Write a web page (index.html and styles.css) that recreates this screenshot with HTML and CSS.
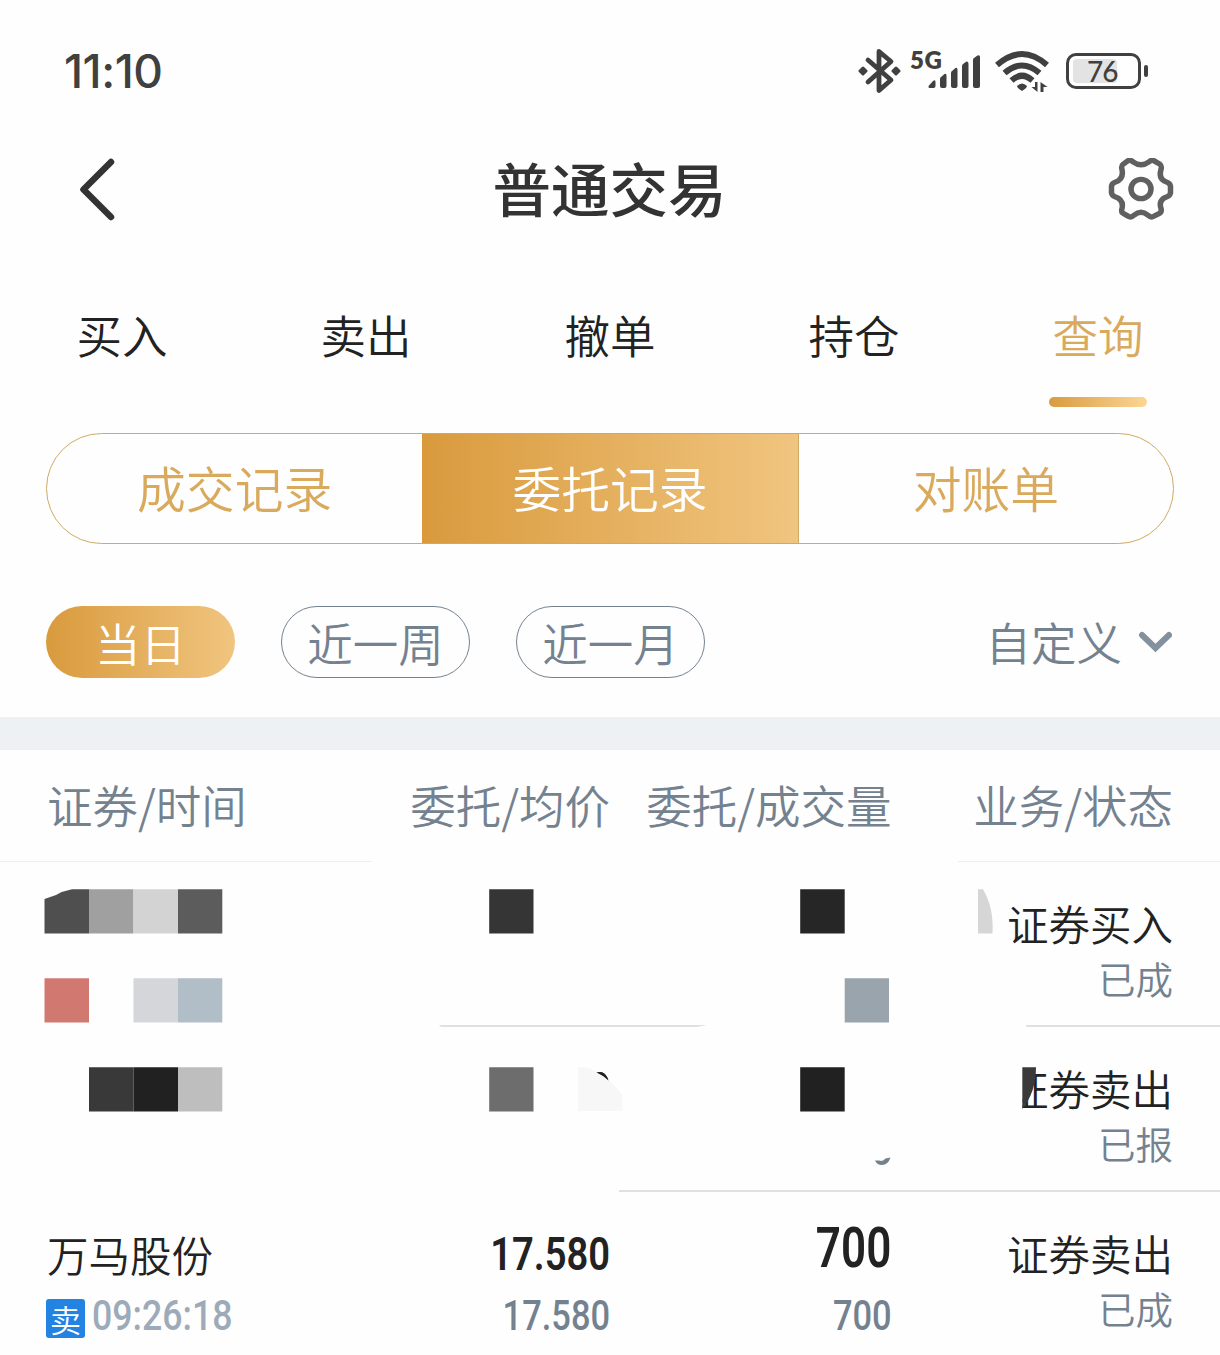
FILE: index.html
```html
<!DOCTYPE html>
<html lang="zh-CN">

<head>
    <meta charset="UTF-8">
    <meta name="viewport" content="width=device-width, initial-scale=1.0">
    <title>普通交易</title>
    <link rel="stylesheet" href="styles.css">
</head>

<body>
    <div class="status-bar">
        <span class="clock">11:10</span>
        <div class="status-icons">
            <svg class="bluetooth" width="44" height="48" viewBox="0 0 44 48">
                <path d="M10 13 L33 33 L21 43.500 V4.500 L33 14.500 L10 35" fill="none" stroke="#404040" stroke-width="4.8" stroke-linejoin="round" stroke-linecap="round" />
                <path d="M5 21 L8 24 L5 27 L2 24 Z M38 21 L41 24 L38 27 L35 24 Z" fill="#404040" stroke="#404040" stroke-width="3" stroke-linejoin="round" />
            </svg>
            <div class="signal">
                <span class="network">5G</span>
                <svg width="54" height="36" viewBox="0 0 54 36" fill="#404040">
                    <path d="M1 32.500 L5 28 Q7.500 26 7.500 29 V33 Q7.500 35 5.500 35 H2 Q-0.500 35 1 32.500Z" />
                    <path d="M12 26 Q12 24.500 13 24 L16.500 21 Q18.500 20 18.500 23 V33 Q18.500 35 16.500 35 H14 Q12 35 12 33Z" />
                    <path d="M23 20 Q23 18.500 24 18 L27.500 15 Q29.500 14 29.500 17 V33 Q29.500 35 27.500 35 H25 Q23 35 23 33Z" />
                    <path d="M34 13 Q34 12 35 11 L38.500 8.500 Q40.500 8 40.500 11 V33 Q40.500 35 38.500 35 H36 Q34 35 34 33Z" />
                    <path d="M45 7 Q45 5.500 46 5 L49.500 2.500 Q52 1.500 52 4 V33 Q52 35 50 35 H47 Q45 35 45 33Z" />
                </svg>
            </div>
            <svg class="wifi" width="56" height="44" viewBox="0 0 56 44">
                <g fill="none" stroke="#404040" stroke-width="6">
                    <path d="M3 16 Q28 -6 53 16" />
                    <path d="M10.500 24 Q28 9 45.500 24" />
                    <path d="M17.500 31.500 Q28 22 38.500 31.500" />
                </g>
                <path d="M23 37 Q28 32 33 37 Q33 39 28 42 Q23 39 23 37Z" fill="#404040" />
                <path d="M43.500 33 V43 L37.500 38 H41 V33Z M46.500 43 V33 L53.500 38 H49.500 V43Z" fill="#404040" />
            </svg>
            <div class="battery"><span class="level">76</span></div>
        </div>
    </div>

    <header class="header">
        <svg class="back" width="40" height="66" viewBox="0 0 40 66">
            <path d="M34 6 L6.500 33.500 L34 61" fill="none" stroke="#333" stroke-width="6.5" stroke-linecap="round" stroke-linejoin="round" />
        </svg>
        <h1>普通交易</h1>
        <svg class="settings" width="66" height="62" viewBox="0 0 66 64" preserveAspectRatio="none" fill="none" stroke="#606060" stroke-width="5.500" stroke-linejoin="round">
            <path d="M19 3.500 Q22 1 25 4 Q33 10 41 4 Q44 1 47 3.500 L52 6.500 Q54 8 53 12 Q50 22 59 25 Q62 26 62.500 29 V36 Q62 39 59 40 Q50 43 53 52 Q54 56 51 57.500 L46 60 Q43 62 40 59 Q33 53 26 59 Q23 62 20 60 L15 57 Q13 56 14 52 Q16 43 7 40 Q4 39 3.500 36 V29 Q4 26 7 25 Q16 22 14 12 Q13 8 15 6.500 Z" />
            <circle cx="33" cy="32" r="10" />
        </svg>
    </header>

    <nav class="tabs">
        <a class="tab">买入</a>
        <a class="tab">卖出</a>
        <a class="tab">撤单</a>
        <a class="tab">持仓</a>
        <a class="tab active">查询</a>
    </nav>

    <div class="segments">
        <div class="segment">成交记录</div>
        <div class="segment active">委托记录</div>
        <div class="segment">对账单</div>
    </div>

    <div class="filters">
        <div class="pill active">当日</div>
        <div class="pill">近一周</div>
        <div class="pill">近一月</div>
        <div class="custom">
            <span>自定义</span>
            <svg width="34" height="22" viewBox="0 0 34 22">
                <path d="M4 4 L17.500 17 L31 4" fill="none" stroke="#83909d" stroke-width="6" stroke-linecap="round" stroke-linejoin="miter" />
            </svg>
        </div>
    </div>

    <main class="orders">
        <div class="row head">
            <div>证券/时间</div>
            <div>委托/均价</div>
            <div>委托/成交量</div>
            <div>业务/状态</div>
        </div>
        <div class="list">
            <div class="row">
                <div class="cell"></div>
                <div class="cell"></div>
                <div class="cell"></div>
                <div class="cell status">
                    <span class="main">证券买入</span>
                    <span class="sub">已成</span>
                </div>
            </div>
            <div class="row">
                <div class="cell"></div>
                <div class="cell"></div>
                <div class="cell"></div>
                <div class="cell status">
                    <span class="main">证券卖出</span>
                    <span class="sub">已报</span>
                </div>
            </div>
            <div class="row">
                <div class="cell stock">
                    <span class="main">万马股份</span>
                    <span class="sub"><i class="badge">卖</i><b class="time">09:26:18</b></span>
                </div>
                <div class="cell price">
                    <span class="main">17.580</span>
                    <span class="sub">17.580</span>
                </div>
                <div class="cell amount">
                    <span class="main">700</span>
                    <span class="sub">700</span>
                </div>
                <div class="cell status">
                    <span class="main">证券卖出</span>
                    <span class="sub">已成</span>
                </div>
            </div>

            <!-- mosaic over the private rows -->
            <svg class="mosaic" width="1220" height="332" viewBox="0 861 1220 332">
                <g fill="#fefefe">
                    <path d="M372 861 H958 V863 H372Z" />
                    <path d="M0 1024 H438 L442 1028 H0Z M692 1028 L712 1024 H1025 L1027 1028Z" />
                    <path d="M0 1189 H620 L618 1193 H0Z" />
                    <path d="M1000 1060 H1022.500 V1115 H1000Z" />
                </g>
                <path d="M44.500 899 L56 895 Q63 891 72 889.300 H89 V933.500 H44.500Z" fill="#4f4f4f" />
                <path d="M89 889.300 H133.500 V933.500 H89Z" fill="#a0a0a0" />
                <path d="M133.500 889.300 H178 V933.500 H133.500Z" fill="#d3d3d3" />
                <path d="M178 889.300 H222.300 V933.500 H178Z" fill="#5c5c5c" />
                <path d="M44.500 978.200 H89 V1022.500 H44.500Z" fill="#d17971" />
                <path d="M133.500 978.200 H178 V1022.500 H133.500Z" fill="#d5d6da" />
                <path d="M178 978.200 H222.300 V1022.500 H178Z" fill="#b1bdc7" />
                <path d="M89 1067.200 H133.500 V1111.500 H89Z" fill="#393939" />
                <path d="M133.500 1067.200 H178 V1111.500 H133.500Z" fill="#212121" />
                <path d="M178 1067.200 H222.300 V1111.500 H178Z" fill="#bebebe" />
                <path d="M489.200 889.300 H533.500 V933.500 H489.200Z" fill="#353535" />
                <path d="M489.200 1067.200 H533.500 V1111.500 H489.200Z" fill="#6d6d6d" />
                <path d="M596.500 1072.500 Q605 1070 608.500 1080.500 Q603 1076 596.500 1072.500Z" fill="#222" />
                <path d="M578 1067.200 H585 Q606 1073 622.500 1095.500 V1111 H578Z" fill="#f7f7f7" />
                <path d="M596.500 1072.500 Q605 1070 608.500 1080.500 Q603 1075 596.500 1072.500Z" fill="#222" />
                <path d="M800.200 889.300 H844.700 V933.500 H800.200Z" fill="#262626" />
                <path d="M844.700 978.200 H889 V1022.500 H844.700Z" fill="#99a4ad" />
                <path d="M800.200 1067.200 H844.700 V1111.500 H800.200Z" fill="#212121" />
                <path d="M875 1160.500 L879 1160.500 Q883 1162 885.500 1158.500 L890.500 1157.500 Q888 1165 882 1165 Q877 1165 875 1160.500Z" fill="#748290" />
                <path d="M978 889.300 H983 Q994 908 992.500 933.500 H978Z" fill="#d6d6d6" />
                <path d="M1022.300 1067.200 H1036 Q1036 1092 1022.300 1109Z" fill="#3a3a3a" />
            </svg>
        </div>
    </main>
</body>

</html>
```
FILE: styles.css
```css
* {
    box-sizing: border-box;
}

body {
    margin: 0;
    height: 1355px;
    overflow: hidden;
    background-color: #fefefe;
    color: #222;
    font-family: 'Noto Sans CJK SC', sans-serif;
    font-size: 45.5px;
    font-weight: 350;
}

.status-bar {
    display: flex;
    justify-content: space-between;
    align-items: center;
    height: 142px;
    padding: 0 71px 0 64px;
    color: #404040;
}

.clock {
    font-family: Inter, sans-serif;
    font-size: 46px;
    font-weight: 500;
    letter-spacing: -0.5px;
}

.status-icons {
    display: flex;
    align-items: center;
}

.signal {
    display: flex;
    align-items: center;
    margin-left: 8px;
}

.network {
    width: 18px;
    margin-top: -22px;
    font-family: Lato, sans-serif;
    font-size: 24px;
    font-weight: 800;
    line-height: 24px;
    letter-spacing: 0.5px;
}

.wifi {
    margin-left: 12px;
}

.battery {
    position: relative;
    width: 75px;
    height: 36px;
    margin: 0 8px 0 16px;
    padding: 3px 4px;
    border: 3px solid #404040;
    border-radius: 10px;
}

.battery::after {
    content: "";
    position: absolute;
    right: -10px;
    top: 9px;
    width: 4px;
    height: 12px;
    border-radius: 2px;
    background-color: #404040;
}

.level {
    display: block;
    width: 44px;
    height: 24px;
    padding-left: 14px;
    border-radius: 4px;
    background-color: #e3e3e3;
    font-family: Lato, sans-serif;
    font-size: 28px;
    font-weight: 500;
    line-height: 24px;
    letter-spacing: -1px;
}

.header {
    display: flex;
    justify-content: space-between;
    align-items: center;
    height: 94px;
    padding: 0 46px 0 77px;
}

.header h1 {
    margin: -4px 6px 0 0;
    color: #333;
    font-size: 58.5px;
    font-weight: 500;
    line-height: 94px;
}

.tabs {
    display: grid;
    grid-template-columns: repeat(5, 1fr);
    height: 171px;
    padding-top: 60px;
}

.tab {
    display: flex;
    flex-direction: column;
    align-items: center;
    line-height: 76px;
}

.tab.active {
    color: #d9a95c;
}

.tab.active::after {
    content: "";
    width: 98px;
    height: 10px;
    margin-top: 25px;
    border-radius: 5px;
    background: linear-gradient(90deg, #d99b40, #fbd795);
}

.segments {
    display: grid;
    grid-template-columns: repeat(3, 1fr);
    height: 111px;
    margin: 26px 46px 0;
    border: 1px solid #d0aa65;
    border-radius: 56px;
    overflow: hidden;
    color: #d9a95c;
    font-size: 48.8px;
    line-height: 106px;
    text-align: center;
}

.segment.active {
    background: linear-gradient(90deg, #d99a3d, #f0c57f);
    color: #fff;
}

.segment:last-child {
    border-left: 1px solid #d0aa65;
}

.filters {
    display: flex;
    align-items: center;
    gap: 46px;
    height: 173px;
    padding: 23px 48px 0 46px;
    color: #748290;
}

.pill {
    width: 189px;
    height: 72px;
    border: 1px solid #748290;
    border-radius: 36px;
    line-height: 70px;
    text-align: center;
}

.pill.active {
    border: none;
    background: linear-gradient(90deg, #d99a3d, #f0c57f);
    color: #fff;
    line-height: 72px;
}

.custom {
    display: flex;
    align-items: center;
    gap: 16px;
    margin-left: auto;
    line-height: 70px;
}

.custom span {
    margin-top: -2px;
}

.orders {
    border-top: 33px solid #edf1f4;
}

.row {
    display: grid;
    grid-template-columns: repeat(4, 1fr);
    height: 165px;
    padding: 0 47px;
    border-bottom: 2px solid #dfe0e1;
    text-align: right;
}

.row.head {
    height: 112px;
    border-bottom: 1px solid #eee;
    color: #748290;
    line-height: 109px;
    white-space: nowrap;
}

.row > :first-child {
    text-align: left;
}

.list {
    position: relative;
}

.mosaic {
    position: absolute;
    left: 0;
    top: -1px;
}

.cell {
    display: flex;
    flex-direction: column;
    align-items: flex-end;
    padding-top: 32px;
}

.main {
    font-size: 41.5px;
    line-height: 60px;
}

.sub {
    color: #748290;
    font-size: 37.5px;
    line-height: 50px;
}

.status .main {
    line-height: 59px;
}

.stock {
    align-items: flex-start;
}

.stock .sub {
    display: flex;
    align-items: center;
    gap: 7px;
    margin: 7px 0 0 -1px;
}

.badge {
    width: 39px;
    height: 39px;
    margin-top: 5px;
    border-radius: 3px;
    background-color: #2283e2;
    color: #fff;
    font-size: 31px;
    font-style: normal;
    line-height: 39px;
    text-align: center;
}

/* narrow digits */
.time,
.price span,
.amount span {
    font-family: Roboto, sans-serif;
    font-weight: 500;
    transform: scaleX(0.82);
    transform-origin: right;
}

.time {
    color: #9dabb9;
    font-size: 42px;
    transform: scaleX(0.85);
    transform-origin: left;
}

.price .main {
    font-size: 46.5px;
    font-weight: 600;
}

.price .sub,
.amount .sub {
    margin-top: 7px;
    font-size: 42px;
}

.amount {
    padding-top: 26px;
}

.amount .main {
    font-size: 55px;
    font-weight: 600;
    transform: scaleX(0.8);
}

.amount .sub {
    margin-top: 13px;
}
```
